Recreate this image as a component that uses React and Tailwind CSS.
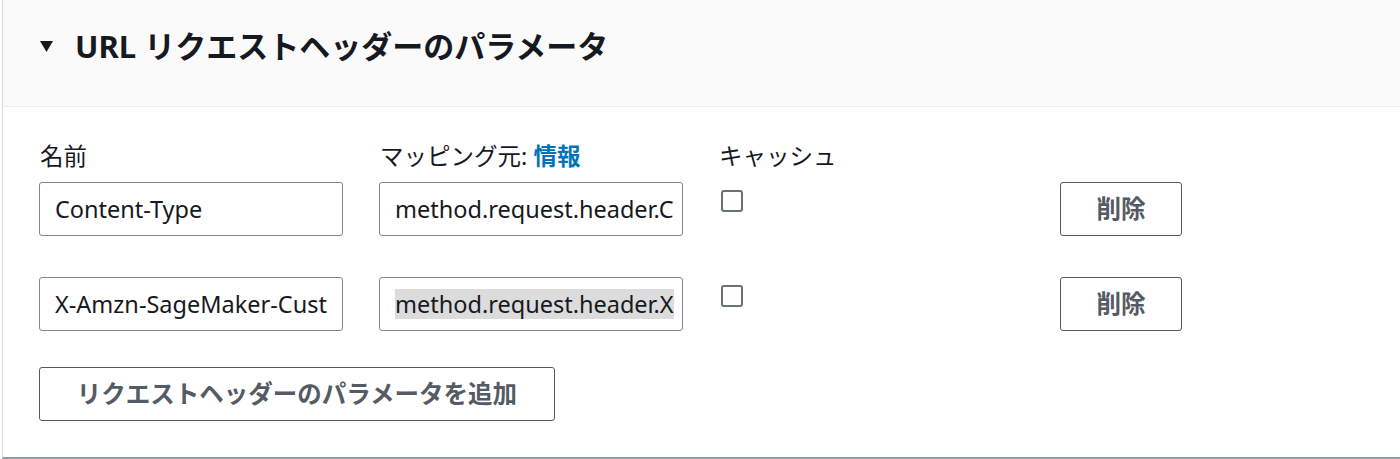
import React from 'react';

const font = { fontFamily: '"Noto Sans", "Noto Sans CJK JP", sans-serif' };

const rows = [
  { name: 'Content-Type', mapped: 'method.request.header.C', selected: false },
  { name: 'X-Amzn-SageMaker-Cust', mapped: 'method.request.header.X', selected: true },
];

// Fake text box, values shown as far as the field displays them
const TextBox = ({ value, selected }) => (
  <div className="h-[54px] w-[304px] rounded-[3px] border border-[#7d8790] bg-white pl-[15px] flex items-center whitespace-nowrap">
    <span className={`text-[23.5px] leading-[30px] text-[#16191f] ${selected ? 'bg-[#dcdcdc]' : ''}`}>{value}</span>
  </div>
);

const Row = ({ row }) => (
  <div className="grid grid-cols-[304px_304px_304px_122px] gap-x-[36px]">
    <TextBox value={row.name} />
    <TextBox value={row.mapped} selected={row.selected} />
    <div className="pt-[8px] pl-[2px]">
      <div className="w-[22px] h-[22px] rounded-[3px] border-2 border-[#687078] bg-white" />
    </div>
    <button className="ml-[1px] h-[54px] w-[122px] rounded-[3px] border border-[#545b64] bg-white text-[24.5px] font-bold text-[#545b64]">
      削除
    </button>
  </div>
);

export default function App() {
  return (
    <div className="w-[1400px] h-[459px] bg-white" style={font}>
      <div className="ml-[2px] h-[459px] border-l border-[#d5dbdb] border-b-2 border-b-[#939e9e] flex flex-col">
        {/* Section header */}
        <div className="h-[107px] bg-[#fafafa] border-b border-[#eaeded] pl-[37px] pt-[26px]">
          <div className="flex items-center h-[40px]">
            <svg width="13" height="11" viewBox="0 0 13 11" className="mr-[22px] mt-[1px]">
              <polygon points="0,0 13,0 6.5,11" fill="#16191f" />
            </svg>
            <h2 className="text-[31px] leading-[40px] font-bold text-[#16191f]">URL リクエストヘッダーのパラメータ</h2>
          </div>
        </div>

        {/* Body */}
        <div className="pl-[36px] pt-[34px]">
          <div className="grid grid-cols-[304px_304px_304px] gap-x-[36px] text-[23.5px] leading-[30px] text-[#16191f] mb-[11px]">
            <div className="pl-[1px]">名前</div>
            <div className="pl-[1px]">
              マッピング元: <a className="text-[#0073bb] font-bold">情報</a>
            </div>
            <div>キャッシュ</div>
          </div>

          <div className="flex flex-col gap-y-[41px]">
            {rows.map((row, i) => (
              <Row key={i} row={row} />
            ))}
          </div>

          <button className="mt-[36px] h-[54px] w-[516px] rounded-[3px] border border-[#545b64] bg-white text-[24.5px] font-bold text-[#545b64]">
            リクエストヘッダーのパラメータを追加
          </button>
        </div>
      </div>
    </div>
  );
}
